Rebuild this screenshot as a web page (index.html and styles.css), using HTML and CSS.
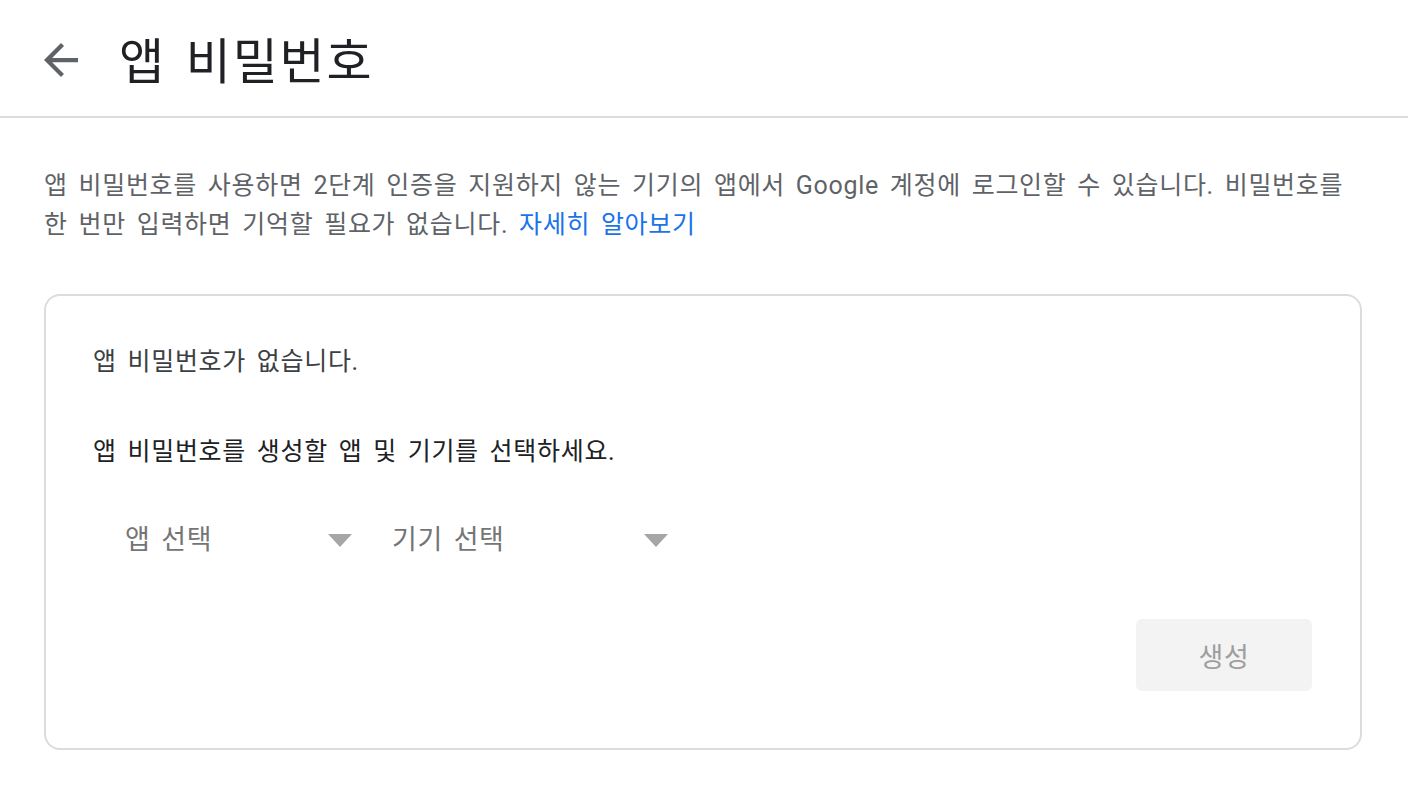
FILE: index.html
```html
<!DOCTYPE html>
<html lang="ko">
<head>
<meta charset="utf-8">
<title>앱 비밀번호</title>
<link rel="stylesheet" href="styles.css">
</head>
<body>
<header class="header">
  <button class="back" aria-label="뒤로">
    <svg viewBox="4 4 16 16" width="34" height="34"><path d="M20 11H7.83l5.59-5.59L12 4l-8 8 8 8 1.41-1.41L7.83 13H20v-2z" fill="#5f6368"/></svg>
  </button>
  <h1 class="title">앱 비밀번호</h1>
</header>
<main class="content">
  <p class="intro">앱 비밀번호를 사용하면 2단계 인증을 지원하지 않는 기기의 앱에서 Google 계정에 로그인할 수 있습니다. 비밀번호를 한 번만 입력하면 기억할 필요가 없습니다. <a href="#" class="link">자세히 알아보기</a></p>
  <section class="card">
    <p class="card-text">앱 비밀번호가 없습니다.</p>
    <p class="card-text second">앱 비밀번호를 생성할 앱 및 기기를 선택하세요.</p>
    <div class="selects">
      <div class="select select-app"><span>앱 선택</span><span class="caret"></span></div>
      <div class="select select-device"><span>기기 선택</span><span class="caret"></span></div>
    </div>
    <div class="actions">
      <button class="generate" disabled>생성</button>
    </div>
  </section>
</main>
</body>
</html>
```
FILE: styles.css
```css
* { box-sizing: border-box; }
html, body { margin: 0; padding: 0; background: #fff; }
body {
  font-family: Roboto, "Noto Sans CJK KR", sans-serif;
  color: #202124;
}
.header {
  height: 118px;
  border-bottom: 2px solid #dadce0;
  display: flex;
  align-items: center;
  padding-left: 44px;
}
.back {
  border: 0;
  background: none;
  padding: 0;
  width: 34px;
  height: 34px;
  display: flex;
  margin-top: 4px;
}
.title {
  margin: 0 0 0 41px;
  margin-top: -2px;
  font-size: 49px;
  font-weight: 400;
  letter-spacing: 1.8px;
  word-spacing: 6px;
  color: #202124;
}
.content {
  padding: 0 46px 0 44px;
}
.intro {
  margin: 0;
  padding-top: 48px;
  font-size: 25px;
  line-height: 39px;
  letter-spacing: 0.7px;
  word-spacing: 3.9px;
  color: #5f6368;
}
.link { color: #1a73e8; text-decoration: none; }
.card {
  margin-top: 50px;
  border: 2px solid #dadce0;
  border-radius: 16px;
  height: 456px;
  padding: 48px 48px 0 47px;
}
.card-text {
  margin: 0;
  font-size: 25px;
  line-height: 36px;
  letter-spacing: 0.7px;
  word-spacing: 3.9px;
  color: #3c4043;
}
.card-text.second { margin-top: 54px; color: #202124; }
.selects {
  display: flex;
  margin-top: 50px;
  padding-left: 32px;
}
.select {
  display: flex;
  align-items: center;
  justify-content: space-between;
  font-size: 27px;
  line-height: 40px;
  letter-spacing: 0.6px;
  word-spacing: 3.5px;
  color: #757575;
}
.select-app { width: 227px; }
.select-device { width: 276px; margin-left: 40px; }
.caret {
  width: 0; height: 0;
  border-left: 12.5px solid transparent;
  border-right: 12.5px solid transparent;
  border-top: 13px solid #a6a6a6;
}
.actions {
  display: flex;
  justify-content: flex-end;
  margin-top: 59px;
}
.generate {
  width: 176px;
  height: 72px;
  border: 0;
  border-radius: 6px;
  background: #f3f3f3;
  font-family: Roboto, "Noto Sans CJK KR", sans-serif;
  font-size: 27px;
  letter-spacing: 0.6px;
  color: #9e9e9e;
}
```
